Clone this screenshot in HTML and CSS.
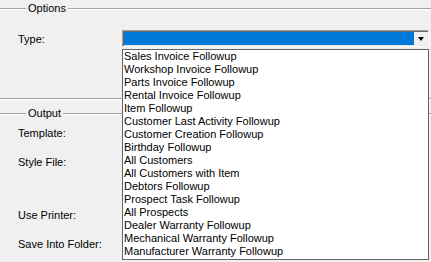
FILE: index.html
```html
<!DOCTYPE html>
<html lang="en">
<head>
    <meta charset="UTF-8">
    <title>Followup Options</title>
    <link rel="stylesheet" href="styles.css">
</head>
<body>
    <div id="form">
        <fieldset class="group group-options">
            <legend>Options</legend>
            <div class="row row-type">
                <span class="label">Type:</span>
                <div class="combo">
                    <div class="combo-value"></div>
                    <div class="combo-button"><span class="arrow"></span></div>
                    <ul class="combo-list">
                        <li>Sales Invoice Followup</li>
                        <li>Workshop Invoice Followup</li>
                        <li>Parts Invoice Followup</li>
                        <li>Rental Invoice Followup</li>
                        <li>Item Followup</li>
                        <li>Customer Last Activity Followup</li>
                        <li>Customer Creation Followup</li>
                        <li>Birthday Followup</li>
                        <li>All Customers</li>
                        <li>All Customers with Item</li>
                        <li>Debtors Followup</li>
                        <li>Prospect Task Followup</li>
                        <li>All Prospects</li>
                        <li>Dealer Warranty Followup</li>
                        <li>Mechanical Warranty Followup</li>
                        <li>Manufacturer Warranty Followup</li>
                    </ul>
                </div>
            </div>
        </fieldset>
        <fieldset class="group group-output">
            <legend>Output</legend>
            <div class="row first"><span class="label">Template:</span></div>
            <div class="row"><span class="label">Style File:</span></div>
            <div class="row wide-gap"><span class="label">Use Printer:</span></div>
            <div class="row"><span class="label">Save Into Folder:</span></div>
        </fieldset>
    </div>
</body>
</html>
```
FILE: styles.css
```css
body {
    margin: 0;
    background-color: #f0f0f0;
    color: #000;
    font-family: 'Liberation Sans', Arial, sans-serif;
    font-size: 11px;
    width: 431px;
    height: 262px;
    overflow: hidden;
}

#form {
    width: 431px;
}

.group {
    margin: 0 0 0 -3px;
    padding: 0 0 0 20px;
    width: 420px;
    border: 1px solid #a0a0a0;
    box-shadow: 1px 1px 0 #fff, inset 1px 1px 0 #fff;
}

.group legend {
    margin-left: 8px;
    padding: 0 2px;
    line-height: 16px;
    background: #f0f0f0;
}

.group-options {
    height: 97px;
}

.group-output {
    margin-top: 6px;
    height: 160px;
}

.row {
    display: flex;
    align-items: center;
    height: 21px;
}

.row + .row {
    margin-top: 8px;
}

.row.first {
    margin-top: 1px;
}

.row.wide-gap {
    margin-top: 32px;
}

.row-type {
    margin-top: 14px;
    height: 17px;
}

.label {
    width: 104px;
    flex: none;
}

.combo {
    position: relative;
    display: flex;
    width: 303px;
    height: 13px;
    padding: 1px;
    border: 1px solid;
    border-color: #a0a0a0 #fff #fff #a0a0a0;
    box-shadow: inset 1px 1px 0 #696969, inset -1px -1px 0 #e3e3e3;
}

.combo-value {
    flex: 1;
    background: #0078d7;
}

.combo-button {
    width: 13px;
    display: flex;
    align-items: center;
    justify-content: center;
    background: #f0f0f0;
}

.arrow {
    width: 0;
    height: 0;
    border-left: 3.5px solid transparent;
    border-right: 3.5px solid transparent;
    border-top: 4px solid #000;
}

.combo-list {
    position: absolute;
    top: 18px;
    left: -1px;
    width: 303px;
    margin: 0;
    padding: 0 1px 1px 1px;
    list-style: none;
    background: #fff;
    border: 1px solid #646464;
    z-index: 2;
}

.combo-list li {
    height: 13px;
    line-height: 13px;
    white-space: nowrap;
}
```
